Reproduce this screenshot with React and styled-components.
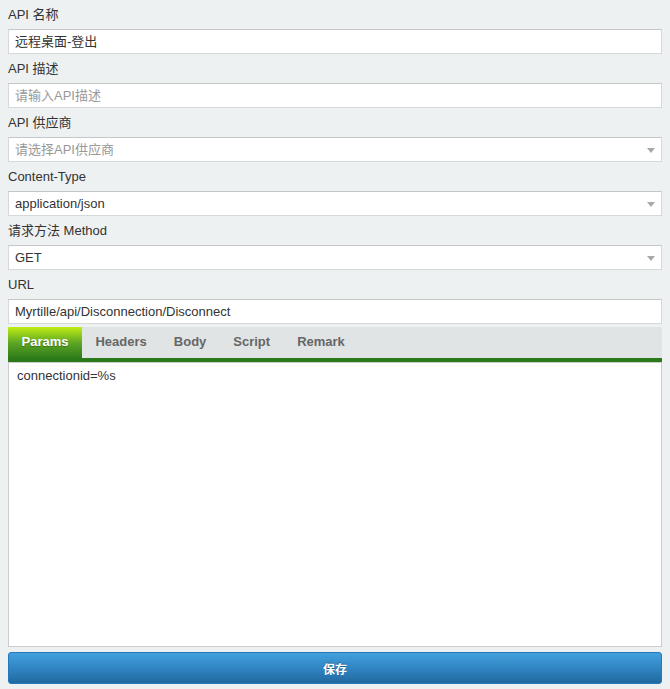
import React, { useState } from "react";
import styled, { createGlobalStyle } from "styled-components";

const GlobalStyle = createGlobalStyle`
  html, body {
    margin: 0;
    padding: 0;
    background: #eef1f2;
    font-family: "Liberation Sans", Arial, "Noto Sans CJK SC", sans-serif;
    font-size: 13px;
    color: #333;
  }
  * { box-sizing: border-box; }
`;

const fields = [
  { label: "API 名称", value: "远程桌面-登出" },
  { label: "API 描述", placeholder: "请输入API描述" },
  { label: "API 供应商", placeholder: "请选择API供应商", select: true },
  { label: "Content-Type", value: "application/json", select: true },
  { label: "请求方法 Method", value: "GET", select: true },
  { label: "URL", value: "Myrtille/api/Disconnection/Disconnect" },
];

const tabs = ["Params", "Headers", "Body", "Script", "Remark"];

export default function App() {
  const [active, setActive] = useState("Params");

  return (
    <Page>
      <GlobalStyle />
      {fields.map((f) => (
        <Field key={f.label}>
          <Label>{f.label}</Label>
          <InputBox>
            <InputText $placeholder={!f.value}>{f.value || f.placeholder}</InputText>
            {f.select && <Caret />}
          </InputBox>
        </Field>
      ))}

      <TabBar>
        {tabs.map((t) => (
          <Tab key={t} $active={t === active} onClick={() => setActive(t)}>
            {t}
          </Tab>
        ))}
      </TabBar>
      <Editor>connectionid=%s</Editor>

      <SaveButton>保存</SaveButton>
    </Page>
  );
}

const Page = styled.div`
  padding: 0 8px 6px 8px;
  width: 670px;
`;

const Field = styled.div`
  display: flex;
  flex-direction: column;
`;

const Label = styled.div`
  padding: 6px 0 5px;
  line-height: 18px;
  color: #333;
`;

const InputBox = styled.div`
  position: relative;
  display: flex;
  align-items: center;
  height: 25px;
  background: #fff;
  border: 1px solid #d6d9da;
  border-top-color: #c4c7c8;
  padding: 0 6px;
`;

const InputText = styled.span`
  color: ${(p) => (p.$placeholder ? "#999" : "#333")};
  line-height: 22px;
`;

const Caret = styled.span`
  position: absolute;
  right: 6px;
  top: 10px;
  width: 0;
  height: 0;
  border-left: 4px solid transparent;
  border-right: 4px solid transparent;
  border-top: 5px solid #a8a8a8;
`;

const TabBar = styled.div`
  display: flex;
  margin-top: 3px;
  height: 35px;
  background: #e0e4e5;
  border-bottom: 4px solid #2b7a19;
`;

const Tab = styled.div`
  padding: 0 13.5px;
  height: 31px;
  line-height: 30px;
  font-weight: bold;
  cursor: pointer;
  color: ${(p) => (p.$active ? "#fff" : "#666")};
  background: ${(p) =>
    p.$active ? "linear-gradient(to bottom, #c0ee14 0%, #5fa724 50%, #2e7c1a 100%)" : "transparent"};
  text-shadow: ${(p) => (p.$active ? "0 1px 1px rgba(0,0,0,0.3)" : "none")};
`;

const Editor = styled.div`
  height: 285px;
  background: #fff;
  border: 1px solid #ccc;
  padding: 5px 8px;
  color: #333;
  line-height: 16px;
`;

const SaveButton = styled.button`
  display: block;
  width: 100%;
  margin-top: 5px;
  height: 32px;
  border: 1px solid #2677bd;
  border-radius: 3px;
  background: linear-gradient(to bottom, #42a0dd 0%, #2f86c2 50%, #2268a0 100%);
  color: #fff;
  font-family: "Liberation Sans", "Noto Sans CJK SC", sans-serif;
  font-size: 12px;
  font-weight: bold;
  text-shadow: 0 -1px 0 rgba(0, 0, 0, 0.3);
  cursor: pointer;
`;
